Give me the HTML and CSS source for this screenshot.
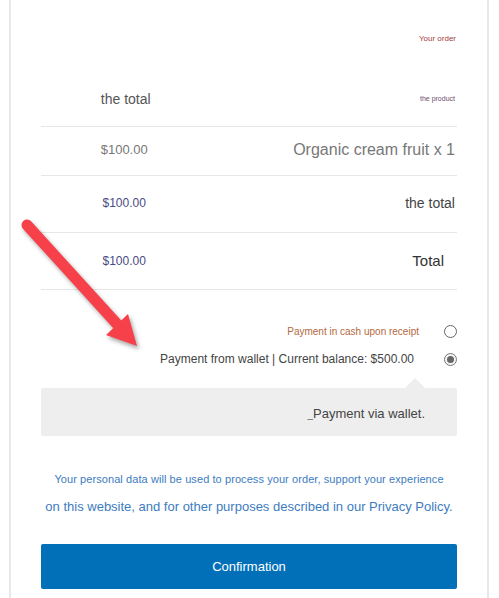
FILE: index.html
```html
<!DOCTYPE html>
<html>
<head>
<meta charset="utf-8">
<link rel="stylesheet" href="styles.css">
</head>
<body>
<div class="page">
  <div class="card">
    <h3 class="order-title">Your order</h3>
    <div class="order-table">
      <div class="row head">
        <div class="cell price">the total</div>
        <div class="cell label small">the product</div>
      </div>
      <div class="row r1">
        <div class="cell price gray">$100.00</div>
        <div class="cell label big">Organic cream fruit x 1</div>
      </div>
      <div class="row r2">
        <div class="cell price blue">$100.00</div>
        <div class="cell label mid">the total</div>
      </div>
      <div class="row r3">
        <div class="cell price blue">$100.00</div>
        <div class="cell label total">Total</div>
      </div>
    </div>
    <div class="methods">
      <label class="method cash">
        <span>Payment in cash upon receipt</span>
        <span class="radio"></span>
      </label>
      <label class="method wallet">
        <span>Payment from wallet | Current balance: $500.00</span>
        <span class="radio checked"></span>
      </label>
    </div>
    <div class="pay-box">
      <span class="under">_</span>Payment via wallet.
    </div>
    <p class="privacy">
      <span class="line1">Your personal data will be used to process your order, support your experience</span>
      <span class="line2">on this website, and for other purposes described in our Privacy Policy.</span>
    </p>
    <button class="confirm">Confirmation</button>
  </div>
  <svg class="arrow" width="160" height="160" viewBox="0 0 160 160">
    <line x1="27" y1="225" x2="117" y2="324" transform="translate(0,-200)" stroke="#f7414a" stroke-width="11" stroke-linecap="round"/>
    <polygon points="106,335 128,314 137,346" transform="translate(0,-200)" fill="#f7414a"/>
  </svg>
</div>
</body>
</html>
```
FILE: styles.css
```css
html, body {
  margin: 0;
  padding: 0;
  background: #fff;
}
body {
  font-family: "Liberation Sans", Arial, sans-serif;
  color: #444;
}
.page {
  position: relative;
  width: 499px;
  height: 598px;
  overflow: hidden;
}
.card {
  margin: 0 10px 0 9px;
  border-left: 2px solid #e8e8e8;
  border-right: 2px solid #e8e8e8;
  padding: 0 30px;
  height: 598px;
  box-sizing: border-box;
}
.order-title {
  margin: 0;
  padding-top: 31px;
  height: 16px;
  line-height: 16px;
  font-size: 8px;
  font-weight: normal;
  color: #a53d3d;
  text-align: right;
  padding-right: 1px;
}
.row {
  display: grid;
  grid-template-columns: 40% 60%;
  align-items: center;
  border-bottom: 1px solid #e6e6e6;
  line-height: 20px;
}
.cell.price {
  text-align: center;
}
.cell.label {
  text-align: right;
  padding-right: 2px;
}
.head {
  padding: 42px 0 17px;
}
.head .price {
  font-size: 14px;
  color: #555;
  padding-left: 3px;
}
.small {
  font-size: 7px;
  color: #6f4d6f;
}
.r1 {
  padding: 13px 0 15px;
}
.r2 {
  padding: 17px 0 19px;
}
.r3 {
  padding: 18px 0 18px;
}
.gray {
  font-size: 13px;
  color: #777;
}
.blue {
  font-size: 12px;
  color: #4a4a86;
}
.big {
  font-size: 16px;
  color: #777;
}
.mid {
  font-size: 14px;
  color: #444;
}
.total {
  font-size: 15px;
  color: #333;
  padding-right: 13px !important;
}
.methods {
  padding-top: 27px;
}
.method {
  display: flex;
  justify-content: flex-end;
  align-items: center;
  gap: 25px;
  height: 28px;
}
.cash {
  font-size: 10px;
  color: #b3693e;
}
.wallet {
  font-size: 12px;
  color: #444;
}
.wallet span:first-child {
  margin-right: 5px;
}
.radio {
  width: 13px;
  height: 13px;
  box-sizing: border-box;
  border: 1px solid #666;
  border-radius: 50%;
  background: #fff;
  position: relative;
}
.radio.checked {
  border-color: #777;
  background: #f4f4f4;
}
.radio.checked::after {
  content: "";
  position: absolute;
  left: 2px;
  top: 2px;
  width: 7px;
  height: 7px;
  border-radius: 50%;
  background: #666;
}
.pay-box {
  position: relative;
  margin-top: 15px;
  background: #eee;
  border-radius: 2px;
  padding: 16px 32px 11px 0;
  text-align: right;
  font-size: 13px;
  line-height: 20px;
  color: #444;
}
.pay-box::before {
  content: "";
  position: absolute;
  top: -10px;
  right: 32px;
  border-left: 10px solid transparent;
  border-right: 10px solid transparent;
  border-bottom: 10px solid #eee;
}
.under {
  color: #666;
  font-size: 10px;
}
.privacy {
  margin: 30px 0 0;
  text-align: center;
  color: #3d7cc0;
}
.privacy span {
  display: block;
  line-height: 27px;
}
.line1 {
  font-size: 11px;
  letter-spacing: 0.08px;
}
.line2 {
  font-size: 13px;
}
.confirm {
  display: block;
  width: 100%;
  margin-top: 24px;
  height: 45px;
  border: none;
  border-radius: 2px;
  background: #0270b8;
  color: #fff;
  font-family: "Liberation Sans", Arial, sans-serif;
  font-size: 13px;
  padding: 0;
}
.arrow {
  position: absolute;
  left: 0;
  top: 200px;
  filter: drop-shadow(2px 3px 2px rgba(0, 0, 0, 0.35));
}
```
